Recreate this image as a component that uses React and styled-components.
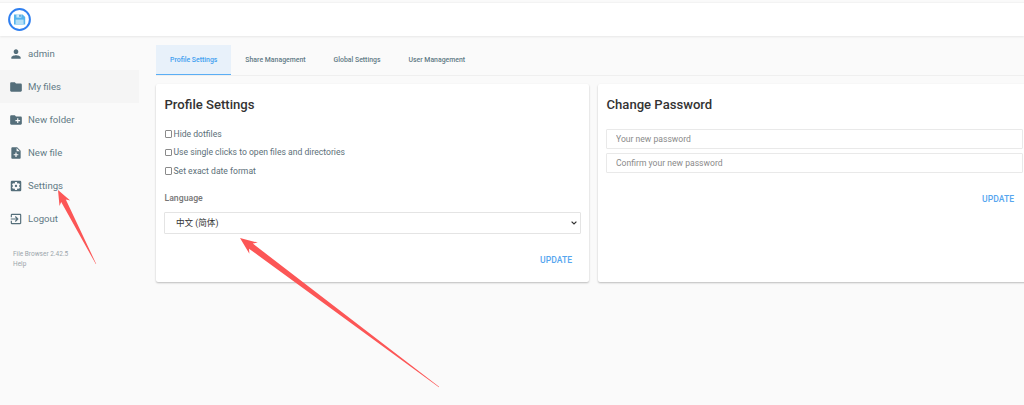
import React from 'react';
import styled, { createGlobalStyle } from 'styled-components';
import {
  MdPerson,
  MdFolder,
  MdCreateNewFolder,
  MdNoteAdd,
  MdSettingsApplications,
  MdExitToApp,
} from 'react-icons/md';

const GlobalStyle = createGlobalStyle`
  html, body {
    margin: 0;
    padding: 0;
    height: 100%;
    background: #fafafa;
    overflow: hidden;
  }
  body {
    font-family: Roboto, "Liberation Sans", "Noto Sans CJK SC", sans-serif;
  }
`;

const Page = styled.div`
  position: relative;
  width: 1024px;
  height: 405px;
  overflow: hidden;
  background: #fafafa;
`;

const Header = styled.header`
  height: 34px;
  margin-top: 2px;
  padding-left: 8px;
  display: flex;
  align-items: center;
  background: #fff;
  border-top: 1px solid #f3f3f3;
  box-sizing: border-box;
  box-shadow: 0 1px 2px rgba(0, 0, 0, 0.08);
`;

const Body = styled.div`
  display: flex;
`;

const Sidebar = styled.nav`
  width: 139px;
  flex: none;
  padding-top: 1px;
`;

const NavItem = styled.div`
  height: 33px;
  display: flex;
  align-items: center;
  gap: 5px;
  padding-left: 9px;
  font-size: 9.6px;
  color: #627a86;
  background: ${(p) => (p.$active ? '#f5f5f5' : 'transparent')};

  svg {
    width: 14px;
    height: 14px;
    fill: #546e7a;
    flex: none;
  }
`;

const NavDivider = styled.div`
  height: 0;
  box-shadow: 0 1px 0 #f0f0f0;
`;

const SideFooter = styled.div`
  margin-top: 15px;
  padding-left: 13px;
  font-size: 6.5px;
  line-height: 9.5px;
  color: #9aa5ab;
`;

const Main = styled.main`
  flex: 1;
  min-width: 0;
  padding: 9px 0 0 17px;
`;

const Tabs = styled.div`
  display: flex;
  height: 31px;
  box-sizing: border-box;
  border-bottom: 1px solid #efefef;
`;

const Tab = styled.div`
  height: 30px;
  padding: 0 14px;
  display: flex;
  align-items: center;
  box-sizing: border-box;
  font-size: 6.9px;
  font-weight: 500;
  color: ${(p) => (p.$active ? '#3f9ff0' : '#627a86')};
  background: ${(p) => (p.$active ? '#e8f1fa' : 'transparent')};
  border-bottom: ${(p) => (p.$active ? '1px solid #5aaef5' : 'none')};
`;

const Cards = styled.div`
  display: grid;
  grid-template-columns: 433px 433px;
  gap: 9px;
  margin-top: 8px;
`;

const Card = styled.section`
  height: 198px;
  box-sizing: border-box;
  background: #fff;
  border-radius: 2px;
  padding: 13px 8px 0;
  box-shadow: 0 1px 2px rgba(0, 0, 0, 0.25);
  display: flex;
  flex-direction: column;
`;

const Title = styled.h3`
  margin: 0 0 11.5px;
  padding-left: 0.5px;
  font-size: 13.1px;
  line-height: 16px;
  font-weight: 500;
  color: #333;
`;

const CheckRow = styled.label`
  display: flex;
  align-items: center;
  gap: 1.5px;
  height: 18.5px;
  padding-left: 0.5px;
  font-size: 8.6px;
  color: #5c6f78;

  input {
    appearance: none;
    width: 7.5px;
    height: 7.5px;
    margin: 0;
    border: 1px solid #8a8a8a;
    border-radius: 1px;
    background: #fff;
    box-sizing: border-box;
  }
`;

const FieldLabel = styled.div`
  margin: 12.5px 0 9px;
  padding-left: 0.5px;
  font-size: 8.7px;
  line-height: 10px;
  font-weight: 500;
  color: #757575;
`;

const LangSelect = styled.select`
  appearance: none;
  width: 417px;
  height: 22px;
  box-sizing: border-box;
  padding: 0 11px;
  font-family: inherit;
  font-size: 8.6px;
  color: #333;
  background: #fff url("data:image/svg+xml,%3Csvg xmlns='http://www.w3.org/2000/svg' width='6' height='4'%3E%3Cpath d='M.6.6 3 3l2.4-2.4' fill='none' stroke='%23333' stroke-width='1.2'/%3E%3C/svg%3E") no-repeat right 3px center;
  border: 1px solid #e4e4e4;
  border-radius: 1px;
  outline: none;
`;

const PasswordFields = styled.div`
  margin-top: 4.5px;
`;

const PwInput = styled.input`
  display: block;
  width: 417px;
  height: 20px;
  box-sizing: border-box;
  padding: 0 9px;
  margin-bottom: 4px;
  font-family: inherit;
  font-size: 8.6px;
  background: #fff;
  border: 1px solid #e9e9e9;
  border-radius: 1px;
  outline: none;

  &::placeholder {
    color: #8a8a8a;
  }
`;

const Actions = styled.div`
  display: flex;
  justify-content: flex-end;
  padding-right: ${(p) => p.$inset}px;
  margin-top: ${(p) => p.$top}px;
`;

const UpdateButton = styled.button`
  padding: 0;
  border: 0;
  background: none;
  font-family: inherit;
  font-size: 8.6px;
  font-weight: 500;
  color: #56a6ef;
`;

const Overlay = styled.svg`
  position: absolute;
  inset: 0;
  pointer-events: none;
`;

const Logo = () => (
  <svg width="23" height="23" viewBox="0 0 23 23">
    <circle cx="11.5" cy="11.5" r="10.4" fill="#fff" stroke="#2f7ff0" strokeWidth="2" />
    <path d="M6 6.5h8.6l2.6 2.6v7.4H6z" fill="#56b4ee" />
    <rect x="8.4" y="6.2" width="5" height="3.4" fill="#c9e9fb" />
    <rect x="11.4" y="6.8" width="1.2" height="2" fill="#2f7fc0" />
    <rect x="7.6" y="11.6" width="8" height="4.4" fill="#b4def6" />
  </svg>
);

// tip/tail in page pixels, widths for the shaft and the barbs
const arrowPoints = (tip, tail, head, barb, shaft) => {
  const dx = tail[0] - tip[0];
  const dy = tail[1] - tip[1];
  const len = Math.hypot(dx, dy);
  const ux = dx / len;
  const uy = dy / len;
  const at = (along, side) =>
    `${(tip[0] + ux * along - uy * side).toFixed(1)},${(tip[1] + uy * along + ux * side).toFixed(1)}`;
  return [
    at(0, 0),
    at(head, barb),
    at(head * 0.8, shaft),
    at(len, 0.2),
    at(len, -0.2),
    at(head * 0.8, -shaft),
    at(head, -barb),
  ].join(' ');
};

export default function App() {
  return (
    <Page>
      <GlobalStyle />
      <Header>
        <Logo />
      </Header>
      <Body>
        <Sidebar>
          <NavItem><MdPerson />admin</NavItem>
          <NavItem $active><MdFolder />My files</NavItem>
          <NavItem><MdCreateNewFolder />New folder</NavItem>
          <NavItem><MdNoteAdd />New file</NavItem>
          <NavDivider />
          <NavItem><MdSettingsApplications />Settings</NavItem>
          <NavItem><MdExitToApp />Logout</NavItem>
          <SideFooter>
            <div>File Browser 2.42.5</div>
            <div>Help</div>
          </SideFooter>
        </Sidebar>
        <Main>
          <Tabs>
            <Tab $active>Profile Settings</Tab>
            <Tab>Share Management</Tab>
            <Tab>Global Settings</Tab>
            <Tab>User Management</Tab>
          </Tabs>
          <Cards>
            <Card>
              <Title>Profile Settings</Title>
              <CheckRow><input type="checkbox" />Hide dotfiles</CheckRow>
              <CheckRow><input type="checkbox" />Use single clicks to open files and directories</CheckRow>
              <CheckRow><input type="checkbox" />Set exact date format</CheckRow>
              <FieldLabel>Language</FieldLabel>
              <LangSelect defaultValue="zh-cn">
                <option value="zh-cn">中文 (简体)</option>
                <option value="en">English</option>
              </LangSelect>
              <Actions $inset={9} $top={21}>
                <UpdateButton>UPDATE</UpdateButton>
              </Actions>
            </Card>
            <Card>
              <Title>Change Password</Title>
              <PasswordFields>
                <PwInput type="password" placeholder="Your new password" />
                <PwInput type="password" placeholder="Confirm your new password" />
              </PasswordFields>
              <Actions $inset={9} $top={17}>
                <UpdateButton>UPDATE</UpdateButton>
              </Actions>
            </Card>
          </Cards>
        </Main>
      </Body>
      <Overlay width="1024" height="405" viewBox="0 0 1024 405">
        <polygon points={arrowPoints([58, 190], [96, 264], 15, 6, 2.6)} fill="#fc5656" />
        <polygon points={arrowPoints([240, 238], [439, 387], 17, 7, 3.2)} fill="#fc5656" />
      </Overlay>
    </Page>
  );
}
